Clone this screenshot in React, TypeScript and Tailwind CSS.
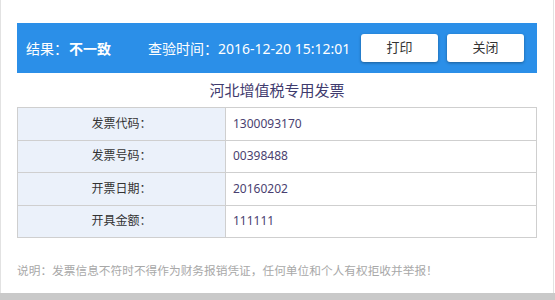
const rows = [
  { label: "发票代码：", value: "1300093170" },
  { label: "发票号码：", value: "00398488" },
  { label: "开票日期：", value: "20160202" },
  { label: "开具金额：", value: "111111" },
];

export default function App() {
  return (
    <div
      className="w-[555px] h-[300px] overflow-hidden bg-white flex flex-col"
      style={{ fontFamily: '"Noto Sans", "Noto Sans CJK SC", sans-serif' }}
    >
      <div className="flex-1 mr-[1px] border-l border-r border-[#e2e2e2] px-[16px] pt-[23px]">
        <div className="h-[50px] bg-[#2b8fe8] flex items-center pl-[9px] pr-[13px] text-white text-[14px]">
          <span>结果：</span>
          <span className="ml-[1px] font-bold">不一致</span>
          <span className="ml-[37px]">查验时间：2016-12-20 15:12:01</span>
          <div className="ml-auto flex gap-[9px]">
            <button className="w-[77px] h-[28px] bg-white rounded-[3px] text-[#333] text-[13px] shadow-[0_1px_3px_rgba(0,0,0,0.35)]">
              打印
            </button>
            <button className="w-[77px] h-[28px] bg-white rounded-[3px] text-[#333] text-[13px] shadow-[0_1px_3px_rgba(0,0,0,0.35)]">
              关闭
            </button>
          </div>
        </div>
        <div className="h-[34px] flex items-center justify-center text-[15px] text-[#3f3b6e]">
          河北增值税专用发票
        </div>
        <table className="w-full border-collapse text-[12px]">
          <tbody>
            {rows.map((row) => (
              <tr key={row.label} className="h-[32.5px]">
                <td className="w-[208px] border border-[#cfcfcf] bg-[#ebf1fa] text-center text-[#333]">
                  {row.label}
                </td>
                <td className="border border-[#cfcfcf] pl-[7px] text-[#4a3f70] text-[12px]">
                  {row.value}
                </td>
              </tr>
            ))}
          </tbody>
        </table>
        <p className="mt-[24px] text-[11.7px] text-[#a8a8a8]">
          说明：发票信息不符时不得作为财务报销凭证，任何单位和个人有权拒收并举报！
        </p>
      </div>
      <div className="h-[7px] bg-[#c9c9c9]" />
    </div>
  );
}
